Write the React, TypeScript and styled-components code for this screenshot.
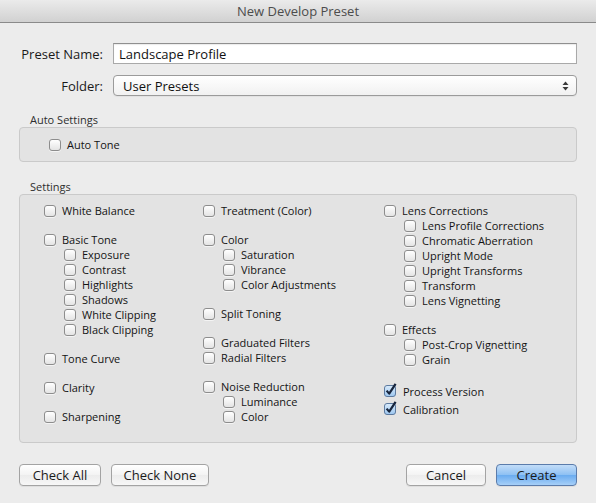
import React from 'react'
import styled, { createGlobalStyle } from 'styled-components'

const GlobalStyle = createGlobalStyle`
  html, body {
    margin: 0;
    padding: 0;
    background: #ececec;
  }
  body {
    font-family: 'Open Sans', 'Liberation Sans', sans-serif;
    color: #111;
  }
`

const Window = styled.div`
  width: 596px;
  height: 503px;
  background: #ececec;
  display: flex;
  flex-direction: column;
  overflow: hidden;
`

const TitleBar = styled.div`
  height: 22px;
  flex: none;
  display: flex;
  align-items: center;
  justify-content: center;
  background: linear-gradient(#ebebeb, #d1d1d1);
  border-bottom: 1px solid #8a8a8a;
  font-size: 13px;
  color: #4c4c4c;
`

const Body = styled.div`
  padding: 20px 19px 0 19px;
  display: flex;
  flex-direction: column;
`

const FormGrid = styled.div`
  display: grid;
  grid-template-columns: 84px 1fr;
  column-gap: 10px;
  row-gap: 11px;
  align-items: center;
`

const FieldLabel = styled.label`
  text-align: right;
  font-size: 13px;
  color: #1a1a1a;
`

const TextField = styled.input`
  box-sizing: border-box;
  height: 21px;
  width: 100%;
  margin: 0;
  padding: 0 5px;
  border: 1px solid #a9a9a9;
  border-top-color: #8f8f8f;
  box-shadow: inset 0 1px 1px rgba(0, 0, 0, 0.08);
  background: #fff;
  font-family: inherit;
  font-size: 13px;
  color: #111;
  outline: none;
`

const PopUp = styled.div`
  box-sizing: border-box;
  height: 21px;
  display: flex;
  align-items: center;
  justify-content: space-between;
  padding: 0 7px 0 9px;
  border: 1px solid #9b9b9b;
  border-radius: 4px;
  background: linear-gradient(#ffffff, #f1f1f1);
  box-shadow: 0 1px 0 rgba(0, 0, 0, 0.04);
  font-size: 13px;
  color: #111;
`

const SectionTitle = styled.div<{ $top: number }>`
  margin-top: ${p => p.$top}px;
  padding-left: 11px;
  font-size: 11px;
  line-height: 14px;
  height: 14px;
  color: #2e2e2e;
`

const Panel = styled.div`
  border: 1px solid #cacaca;
  border-radius: 4px;
  background: #e3e3e3;
`

const AutoPanel = styled(Panel)`
  height: 33px;
  display: flex;
  align-items: center;
  padding-left: 29px;
`

const SettingsPanel = styled(Panel)`
  height: 249px;
  box-sizing: border-box;
  padding: 8px 0 0 24px;
  display: grid;
  grid-template-columns: 159px 181px 1fr;
  align-items: start;
`

const Column = styled.div`
  display: flex;
  flex-direction: column;
`

const Group = styled.div<{ $gap: number }>`
  display: flex;
  flex-direction: column;
  margin-top: ${p => p.$gap}px;
  &:first-child {
    margin-top: 0;
  }
`

const Row = styled.div<{ $sub?: boolean; $tall?: boolean }>`
  display: flex;
  align-items: center;
  gap: 6px;
  height: ${p => (p.$tall ? 18 : 15)}px;
  padding-left: ${p => (p.$sub ? 20 : 0)}px;
  font-size: 11px;
  color: #141414;
  white-space: nowrap;
`

const Box = styled.span`
  box-sizing: border-box;
  width: 12px;
  height: 12px;
  flex: none;
  border: 1px solid #8d8d8d;
  border-radius: 3px;
  background: linear-gradient(#ffffff, #e4e4e4);
  box-shadow: 0 1px 0 rgba(255, 255, 255, 0.6);
`

const Footer = styled.div`
  display: flex;
  justify-content: space-between;
  padding: 21px 19px 0 19px;
`

const ButtonGroup = styled.div`
  display: flex;
  gap: 10px;
`

const Button = styled.button<{ $w: number; $primary?: boolean }>`
  box-sizing: border-box;
  width: ${p => p.$w}px;
  height: 22px;
  margin: 0;
  padding: 0;
  border: 1px solid ${p => (p.$primary ? '#5b7cab' : '#a3a3a3')};
  border-radius: 4px;
  background: ${p =>
    p.$primary
      ? 'linear-gradient(#c3ddf8, #8dc0f3 50%, #6aacf0 51%, #a6cff8)'
      : 'linear-gradient(#ffffff, #f3f3f3 50%, #ececec 51%, #f7f7f7)'};
  box-shadow: 0 1px 0 rgba(0, 0, 0, 0.06);
  font-family: inherit;
  font-size: 13px;
  color: #1a1a1a;
`

function CheckBox({ checked }: { checked?: boolean }) {
  if (!checked) return <Box />
  return (
    <svg width="13" height="14" viewBox="0 0 13 14" style={{ flex: 'none', marginTop: -2 }}>
      <defs>
        <linearGradient id="chk" x1="0" y1="0" x2="0" y2="1">
          <stop offset="0" stopColor="#d9ebfb" />
          <stop offset="1" stopColor="#9cc6ef" />
        </linearGradient>
      </defs>
      <rect x="0.5" y="2.5" width="11" height="11" rx="2.5" fill="url(#chk)" stroke="#5d7a9f" />
      <path d="M2.6 7.6 L5.2 10.6 L11.6 0.8" fill="none" stroke="#17253d" strokeWidth="2.2" strokeLinejoin="round" />
    </svg>
  )
}

function Arrows() {
  return (
    <svg width="7" height="10" viewBox="0 0 7 10">
      <path d="M3.5 0.5 L6.5 4 H0.5 Z" fill="#3a3a3a" />
      <path d="M3.5 9.5 L6.5 6 H0.5 Z" fill="#3a3a3a" />
    </svg>
  )
}

type Item = { label: string; sub?: boolean; checked?: boolean }
type GroupDef = { gap: number; tall?: boolean; items: Item[] }

const columns: GroupDef[][] = [
  [
    { gap: 14, items: [{ label: 'White Balance' }] },
    {
      gap: 14,
      items: [
        { label: 'Basic Tone' },
        { label: 'Exposure', sub: true },
        { label: 'Contrast', sub: true },
        { label: 'Highlights', sub: true },
        { label: 'Shadows', sub: true },
        { label: 'White Clipping', sub: true },
        { label: 'Black Clipping', sub: true },
      ],
    },
    { gap: 14, items: [{ label: 'Tone Curve' }] },
    { gap: 14, items: [{ label: 'Clarity' }] },
    { gap: 14, items: [{ label: 'Sharpening' }] },
  ],
  [
    { gap: 14, items: [{ label: 'Treatment (Color)' }] },
    {
      gap: 14,
      items: [
        { label: 'Color' },
        { label: 'Saturation', sub: true },
        { label: 'Vibrance', sub: true },
        { label: 'Color Adjustments', sub: true },
      ],
    },
    { gap: 14, items: [{ label: 'Split Toning' }] },
    { gap: 14, items: [{ label: 'Graduated Filters' }, { label: 'Radial Filters' }] },
    {
      gap: 14,
      items: [
        { label: 'Noise Reduction' },
        { label: 'Luminance', sub: true },
        { label: 'Color', sub: true },
      ],
    },
  ],
  [
    {
      gap: 14,
      items: [
        { label: 'Lens Corrections' },
        { label: 'Lens Profile Corrections', sub: true },
        { label: 'Chromatic Aberration', sub: true },
        { label: 'Upright Mode', sub: true },
        { label: 'Upright Transforms', sub: true },
        { label: 'Transform', sub: true },
        { label: 'Lens Vignetting', sub: true },
      ],
    },
    {
      gap: 14,
      items: [
        { label: 'Effects' },
        { label: 'Post-Crop Vignetting', sub: true },
        { label: 'Grain', sub: true },
      ],
    },
    {
      gap: 15,
      tall: true,
      items: [
        { label: 'Process Version', checked: true },
        { label: 'Calibration', checked: true },
      ],
    },
  ],
]

export default function App() {
  return (
    <>
      <GlobalStyle />
      <Window>
        <TitleBar>New Develop Preset</TitleBar>
        <Body>
          <FormGrid>
            <FieldLabel>Preset Name:</FieldLabel>
            <TextField defaultValue="Landscape Profile" />
            <FieldLabel>Folder:</FieldLabel>
            <PopUp>
              <span>User Presets</span>
              <Arrows />
            </PopUp>
          </FormGrid>

          <SectionTitle $top={17}>Auto Settings</SectionTitle>
          <AutoPanel>
            <Row>
              <CheckBox />
              <span>Auto Tone</span>
            </Row>
          </AutoPanel>

          <SectionTitle $top={18}>Settings</SectionTitle>
          <SettingsPanel>
            {columns.map((groups, ci) => (
              <Column key={ci}>
                {groups.map((g, gi) => (
                  <Group key={gi} $gap={g.gap}>
                    {g.items.map(it => (
                      <Row key={it.label} $sub={it.sub} $tall={g.tall}>
                        <CheckBox checked={it.checked} />
                        <span>{it.label}</span>
                      </Row>
                    ))}
                  </Group>
                ))}
              </Column>
            ))}
          </SettingsPanel>
        </Body>

        <Footer>
          <ButtonGroup>
            <Button $w={82}>Check All</Button>
            <Button $w={98}>Check None</Button>
          </ButtonGroup>
          <ButtonGroup>
            <Button $w={80}>Cancel</Button>
            <Button $w={81} $primary>
              Create
            </Button>
          </ButtonGroup>
        </Footer>
      </Window>
    </>
  )
}
